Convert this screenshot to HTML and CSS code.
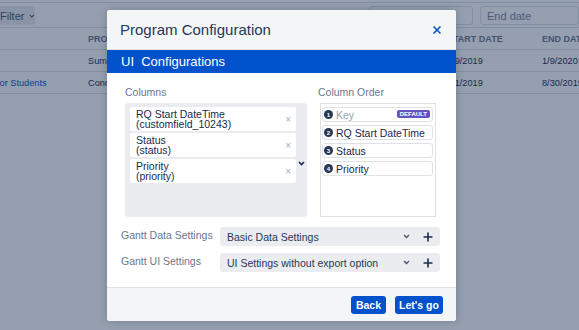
FILE: index.html
```html
<!DOCTYPE html>
<html>
<head>
<meta charset="utf-8">
<link rel="stylesheet" href="styles.css">
</head>
<body>
<div class="page">
  <div class="topline"></div>
  <div class="toolbar">
    <div class="filter">Filter <svg class="chev" width="8" height="6" viewBox="0 0 8 6"><path d="M1 1.5 L4 4.5 L7 1.5" fill="none" stroke="#42526e" stroke-width="1.6"/></svg></div>
    <div class="spacer"></div>
    <div class="input wide"></div>
    <div class="input end">End date</div>
  </div>
  <div class="table">
    <div class="row head">
      <div class="cell"></div><div class="cell">Project</div><div class="cell">Start date</div><div class="cell">End date</div>
    </div>
    <div class="row">
      <div class="cell"></div><div class="cell">Summer</div><div class="cell">1/9/2019</div><div class="cell">1/9/2020</div>
    </div>
    <div class="row">
      <div class="cell link">for Students</div><div class="cell">Concept</div><div class="cell">7/1/2019</div><div class="cell">8/30/2019</div>
    </div>
  </div>
</div>
<div class="overlay"></div>
<div class="modal">
  <div class="m-head">
    <div class="m-title">Program Configuration</div>
    <svg class="close" width="10" height="10" viewBox="0 0 10 10"><path d="M1.5 1.5 L8.5 8.5 M8.5 1.5 L1.5 8.5" stroke="#0052cc" stroke-width="1.6" fill="none"/></svg>
  </div>
  <div class="m-bar">UI&nbsp; Configurations</div>
  <div class="m-body">
    <div class="cols">
      <div class="col-left">
        <div class="lbl">Columns</div>
        <div class="colbox">
          <div class="items">
            <div class="item"><div class="itxt">RQ Start DateTime<br>(customfield_10243)</div><span class="x">×</span></div>
            <div class="item"><div class="itxt">Status<br>(status)</div><span class="x">×</span></div>
            <div class="item"><div class="itxt">Priority<br>(priority)</div><span class="x">×</span></div>
          </div>
          <div class="boxchev"><svg width="7" height="5" viewBox="0 0 7 5"><path d="M1 1 L3.5 3.5 L6 1" fill="none" stroke="#172b4d" stroke-width="1.6"/></svg></div>
        </div>
      </div>
      <div class="col-right">
        <div class="lbl">Column Order</div>
        <div class="orderbox">
          <div class="oitem key"><span class="num">1</span><span class="otxt">Key</span><span class="badge">DEFAULT</span></div>
          <div class="oitem"><span class="num">2</span><span class="otxt">RQ Start DateTime</span></div>
          <div class="oitem"><span class="num">3</span><span class="otxt">Status</span></div>
          <div class="oitem"><span class="num">4</span><span class="otxt">Priority</span></div>
        </div>
      </div>
    </div>
    <div class="setrow">
      <div class="setlbl">Gantt Data Settings</div>
      <div class="select"><span class="seltxt">Basic Data Settings</span>
        <svg class="selchev" width="7" height="5" viewBox="0 0 7 5"><path d="M1 1 L3.5 3.5 L6 1" fill="none" stroke="#42526e" stroke-width="1.3"/></svg>
        <svg class="plus" width="10" height="10" viewBox="0 0 10 10"><path d="M5 0.5 V9.5 M0.5 5 H9.5" stroke="#172b4d" stroke-width="1.6"/></svg>
      </div>
    </div>
    <div class="setrow">
      <div class="setlbl">Gantt UI Settings</div>
      <div class="select"><span class="seltxt">UI Settings without export option</span>
        <svg class="selchev" width="7" height="5" viewBox="0 0 7 5"><path d="M1 1 L3.5 3.5 L6 1" fill="none" stroke="#42526e" stroke-width="1.3"/></svg>
        <svg class="plus" width="10" height="10" viewBox="0 0 10 10"><path d="M5 0.5 V9.5 M0.5 5 H9.5" stroke="#172b4d" stroke-width="1.6"/></svg>
      </div>
    </div>
  </div>
  <div class="m-foot">
    <button class="btn back">Back</button>
    <button class="btn go">Let's go</button>
  </div>
</div>
</body>
</html>
```
FILE: styles.css
```css
* { box-sizing: border-box; }
html, body { margin: 0; padding: 0; }
body {
  width: 579px;
  height: 330px;
  overflow: hidden;
  background: #fff;
  font-family: "Liberation Sans", Arial, sans-serif;
  color: #172b4d;
  position: relative;
}
.page { margin-left: -3px; }
.topline { height: 3px; border-bottom: 1px solid #dfe1e6; }
.toolbar {
  display: flex;
  align-items: center;
  height: 19px;
  margin-top: 3px;
}
.filter {
  width: 38px;
  height: 19px;
  background: #ebecf0;
  border-radius: 3px;
  font-size: 11px;
  color: #42526e;
  display: flex;
  align-items: center;
  padding-left: 3px;
  gap: 5px;
}
.spacer { flex: 1; }
.input {
  height: 19px;
  border: 1px solid #dfe1e6;
  border-radius: 3px;
  background: #fff;
  font-size: 11px;
  color: #7a869a;
  display: flex;
  align-items: center;
  padding-left: 6px;
}
.input.wide { width: 104px; margin-right: 7px; }
.input.end { width: 99px; }
.table { margin-top: 2px; border-top: 1px solid #dfe1e6; }
.row {
  display: grid;
  grid-template-columns: 91px 359px 95px 1fr;
  height: 22px;
  align-items: center;
  border-bottom: 1px solid #dfe1e6;
  font-size: 9.2px;
}
.row.head { font-size: 9px; font-weight: bold; color: #6b778c; text-transform: uppercase; }
.cell { white-space: nowrap; overflow: hidden; }
.link { color: #0052cc; }
.overlay {
  position: absolute;
  inset: 0;
  background: rgba(23, 43, 77, 0.45);
}
.modal {
  position: absolute;
  left: 107px;
  top: 10px;
  width: 349px;
  height: 311px;
  background: #fff;
  border-radius: 3px;
  overflow: hidden;
  box-shadow: 0 0 8px rgba(9, 30, 66, 0.25);
  display: flex;
  flex-direction: column;
}
.m-head {
  height: 40px;
  background: #f4f5f7;
  display: flex;
  align-items: center;
  justify-content: space-between;
  padding: 0 14px 0 13px;
  border-bottom: 1px solid #dfe1e6;
}
.m-title { font-size: 15px; color: #253858; }
.close { margin-top: 1px; }
.m-bar {
  height: 23px;
  background: #0052cc;
  color: #fff;
  font-size: 13px;
  display: flex;
  align-items: center;
  padding-left: 14px;
}
.m-body {
  flex: 1;
  padding: 13px 16px 0 14px;
}
.cols { display: flex; gap: 11px; padding-left: 4px; }
.lbl { font-size: 10.5px; color: #6b778c; height: 13px; line-height: 13px; margin-bottom: 4px; }
.col-left { width: 182px; }
.colbox {
  width: 182px;
  height: 114px;
  background: #ebecf0;
  border-radius: 3px;
  display: flex;
  padding: 4px 0 0 5px;
}
.items { width: 166px; display: flex; flex-direction: column; gap: 2px; }
.item {
  height: 24px;
  background: #fff;
  border-radius: 2px;
  display: flex;
  align-items: center;
  justify-content: space-between;
  padding: 0 5px 0 6px;
}
.itxt { font-size: 10.5px; line-height: 10.5px; color: #172b4d; }
.x { font-size: 10px; color: #a5adba; }
.boxchev { width: 11px; display: flex; justify-content: center; padding-top: 54px; }
.col-right { width: 118px; }
.orderbox {
  width: 116px;
  height: 114px;
  border: 1px solid #dfe1e6;
  margin-left: 2px;
  padding: 3px 2px 0 1px;
  display: flex;
  flex-direction: column;
  gap: 3px;
}
.oitem {
  height: 15px;
  border: 1px solid #dfe1e6;
  border-radius: 3px;
  display: flex;
  align-items: center;
  padding: 0 2px 0 1px;
  font-size: 10.5px;
  color: #172b4d;
}
.oitem.key .otxt { color: #97a0af; }
.num {
  width: 9px;
  height: 9px;
  border-radius: 50%;
  background: #253858;
  color: #fff;
  font-size: 6px;
  font-weight: bold;
  display: flex;
  align-items: center;
  justify-content: center;
  margin-right: 3px;
  flex: none;
}
.otxt { flex: 1; }
.badge {
  background: #6554c0;
  color: #fff;
  font-size: 6px;
  font-weight: bold;
  height: 8px;
  line-height: 8px;
  padding: 0 3px;
  border-radius: 2px;
  margin-top: -1px;
}
.setrow {
  display: flex;
  align-items: center;
  margin-top: 7px;
}
.cols + .setrow { margin-top: 10px; }
.setlbl { width: 99px; font-size: 10.5px; color: #6b778c; margin-top: -3px; }
.select {
  width: 220px;
  height: 19px;
  background: #ebecf0;
  border-radius: 3px;
  display: flex;
  align-items: center;
  padding: 0 7px 0 7px;
  font-size: 10.5px;
  color: #253858;
}
.seltxt { flex: 1; }
.selchev { margin-right: 13px; }
.m-foot {
  height: 34px;
  background: #f4f5f7;
  border-top: 1px solid #dfe1e6;
  display: flex;
  align-items: center;
  justify-content: flex-end;
  gap: 9px;
  padding-right: 13px;
}
.btn {
  height: 18px;
  border: none;
  border-radius: 3px;
  background: #0052cc;
  color: #fff;
  font-family: "Liberation Sans", Arial, sans-serif;
  font-size: 10.5px;
  font-weight: bold;
  padding: 0;
}
.back { width: 35px; }
.go { width: 48px; }
```
